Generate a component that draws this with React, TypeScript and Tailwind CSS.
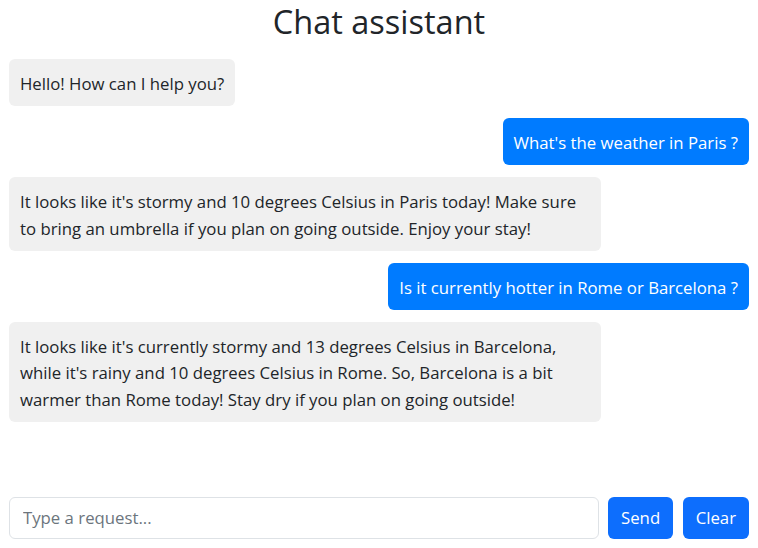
import { useState } from 'react'

type Msg = { role: 'user' | 'assistant'; text: string }

const INITIAL: Msg[] = [
  { role: 'assistant', text: 'Hello! How can I help you?' },
  { role: 'user', text: "What's the weather in Paris ?" },
  {
    role: 'assistant',
    text: "It looks like it's stormy and 10 degrees Celsius in Paris today! Make sure to bring an umbrella if you plan on going outside. Enjoy your stay!",
  },
  { role: 'user', text: 'Is it currently hotter in Rome or Barcelona ?' },
  {
    role: 'assistant',
    text: "It looks like it's currently stormy and 13 degrees Celsius in Barcelona, while it's rainy and 10 degrees Celsius in Rome. So, Barcelona is a bit warmer than Rome today! Stay dry if you plan on going outside!",
  },
]

export default function App() {
  const [messages, setMessages] = useState<Msg[]>(INITIAL)
  const [input, setInput] = useState('')

  function send() {
    if (!input.trim()) return
    setMessages(m => [...m, { role: 'user', text: input.trim() }])
    setInput('')
  }

  return (
    <div className="h-screen flex flex-col px-[9px] bg-white text-[#212529] font-['Open_Sans',sans-serif]">
      {/* Title */}
      <h2 className="text-center text-[32.5px] leading-[44px] font-normal mb-[15px]">Chat assistant</h2>

      {/* Messages */}
      <div className="flex-1 overflow-y-auto flex flex-col gap-[12px]">
        {messages.map((m, i) => (
          <div key={i} className={m.role === 'user' ? 'flex justify-end' : 'flex justify-start'}>
            <div
              className={
                'max-w-[80%] rounded-[6px] px-[11px] pt-[12px] pb-[8.5px] text-[16.75px] leading-[26.5px] ' +
                (m.role === 'user' ? 'bg-[#007bff] text-white' : 'bg-[#f0f0f0] text-[#212529]')
              }
            >
              {m.text}
            </div>
          </div>
        ))}
      </div>

      {/* Input row */}
      <div className="flex gap-[9.5px] pt-[10px] pb-[9.5px]">
        <input
          value={input}
          onChange={e => setInput(e.target.value)}
          onKeyDown={e => { if (e.key === 'Enter') send() }}
          placeholder="Type a request..."
          className="flex-1 min-w-0 h-[41.5px] border border-[#dee2e6] rounded-[6px] px-[13px] text-[16.75px] text-[#212529] placeholder:text-[#6c757d] focus:outline-none"
        />
        <button
          onClick={send}
          className="h-[41.5px] px-[13px] rounded-[6px] bg-[#0d6efd] text-white text-[16.75px]"
        >
          Send
        </button>
        <button
          onClick={() => setMessages([])}
          className="h-[41.5px] px-[13px] rounded-[6px] bg-[#0d6efd] text-white text-[16.75px]"
        >
          Clear
        </button>
      </div>
    </div>
  )
}
